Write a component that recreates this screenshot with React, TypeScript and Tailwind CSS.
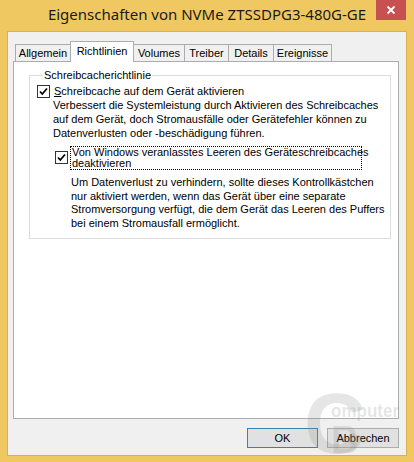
import React from "react";

const TABS = [
  { label: "Allgemein", w: "w-[56px]" },
  { label: "Richtlinien", w: "w-[64px]", active: true },
  { label: "Volumes", w: "w-[52px]" },
  { label: "Treiber", w: "w-[45px]" },
  { label: "Details", w: "w-[46px]" },
  { label: "Ereignisse", w: "w-[59px]" },
];

const Check = () => (
  <span className="w-[13px] h-[13px] shrink-0 border border-[#333] bg-white flex items-center justify-center">
    <svg width="11" height="11" viewBox="0 0 11 11">
      <path d="M2 5.5 L4.3 8 L9 2.5" fill="none" stroke="#000" strokeWidth="1.8" />
    </svg>
  </span>
);

export default function App() {
  return (
    <div className="w-[414px] h-[462px] bg-[#efc862] flex flex-col font-['Liberation_Sans',Arial,sans-serif] text-[11px] leading-[13px] text-black">
      {/* title bar */}
      <div className="h-[31px] shrink-0 grid grid-cols-[1fr_auto_1fr] items-start">
        <div />
        <div className="pt-[4px] font-['Noto_Sans',sans-serif] text-[15px] leading-[20px] text-[#1a1a1a] whitespace-nowrap">
          Eigenschaften von NVMe ZTSSDPG3-480G-GE
        </div>
        <div className="flex justify-end pr-[8px]">
          <div className="w-[30px] h-[20px] bg-[#c75050] flex items-center justify-center">
            <svg width="10" height="10" viewBox="0 0 10 10">
              <path d="M1.5 1.5 L8.5 8.5 M8.5 1.5 L1.5 8.5" stroke="#fff" strokeWidth="1.8" />
            </svg>
          </div>
        </div>
      </div>

      {/* client area */}
      <div className="relative flex-1 ml-[7px] mr-[7px] mb-[6px] border border-[#d9b152] bg-[#f0f0f0] flex flex-col pt-[9px] pl-[5px] pr-[7px]">
        <div className="flex items-end h-[20px] pl-[2px]">
          {TABS.map((t) =>
            t.active ? (
              <div
                key={t.label}
                className={`${t.w} h-[21px] -mb-px -ml-px z-10 bg-white border border-b-0 border-[#acacac] flex items-start justify-center pt-[3px] whitespace-nowrap`}
              >
                {t.label}
              </div>
            ) : (
              <div
                key={t.label}
                className={`${t.w} h-[17px] -ml-px first:ml-0 bg-[#f0f0f0] border border-b-0 border-[#acacac] flex items-center justify-center whitespace-nowrap`}
              >
                {t.label}
              </div>
            )
          )}
        </div>

        <div className="h-[358px] bg-white border border-[#acacac] pt-[7px] pl-[15px] pr-[12px]">
          <fieldset className="border border-[#dcdcdc] h-[170px] pl-[7px] pr-[6px]">
            <legend className="ml-[6px] px-[1px] leading-[13px]">Schreibcacherichtlinie</legend>
            <div className="flex items-center gap-[4px] mt-[3px]">
              <Check />
              <span className="whitespace-nowrap">
                <span className="underline">S</span>chreibcache auf dem Gerät aktivieren
              </span>
            </div>
            <p className="ml-[16px] whitespace-nowrap leading-[14px]">
              Verbessert die Systemleistung durch Aktivieren des Schreibcaches
              <br />
              auf dem Gerät, doch Stromausfälle oder Gerätefehler können zu
              <br />
              Datenverlusten oder -beschädigung führen.
            </p>
            <div className="flex items-start gap-[2px] mt-[6px] ml-[18px]">
              <div className="pt-[5px]">
                <Check />
              </div>
              <span className="border border-dotted border-black px-[1px] leading-[11px] whitespace-nowrap w-[292px]">
                Von Windows veranlasstes Leeren des Geräteschreibcaches
                <br />
                deaktivieren
              </span>
            </div>
            <p className="ml-[34px] mt-[6px] whitespace-nowrap leading-[13.5px]">
              Um Datenverlust zu verhindern, sollte dieses Kontrollkästchen
              <br />
              nur aktiviert werden, wenn das Gerät über eine separate
              <br />
              Stromversorgung verfügt, die dem Gerät das Leeren des Puffers
              <br />
              bei einem Stromausfall ermöglicht.
            </p>
          </fieldset>
        </div>

        <div className="flex justify-end gap-[9px] mt-[9px]">
          <div className="w-[71px] h-[20px] bg-[#e1e1e1] border border-[#3c7fb1] flex items-center justify-center">
            OK
          </div>
          <div className="w-[72px] h-[20px] bg-[#e1e1e1] border border-[#adadad] flex items-center justify-center">
            Abbrechen
          </div>
        </div>

        {/* ComputerBase watermark */}
        <svg
          className="absolute right-[4px] bottom-0 pointer-events-none"
          width="110"
          height="80"
          viewBox="0 0 110 80"
        >
          <g fill="#8c8c8c" fillOpacity="0.22" fontFamily="Liberation Sans, Arial, sans-serif" fontWeight="bold">
            <text x="12" y="78" fontSize="86">C</text>
            <text x="39" y="42" fontSize="19" textLength="68" lengthAdjust="spacingAndGlyphs">omputer</text>
            <text x="39" y="78" fontSize="38">B</text>
          </g>
        </svg>
      </div>
    </div>
  );
}
